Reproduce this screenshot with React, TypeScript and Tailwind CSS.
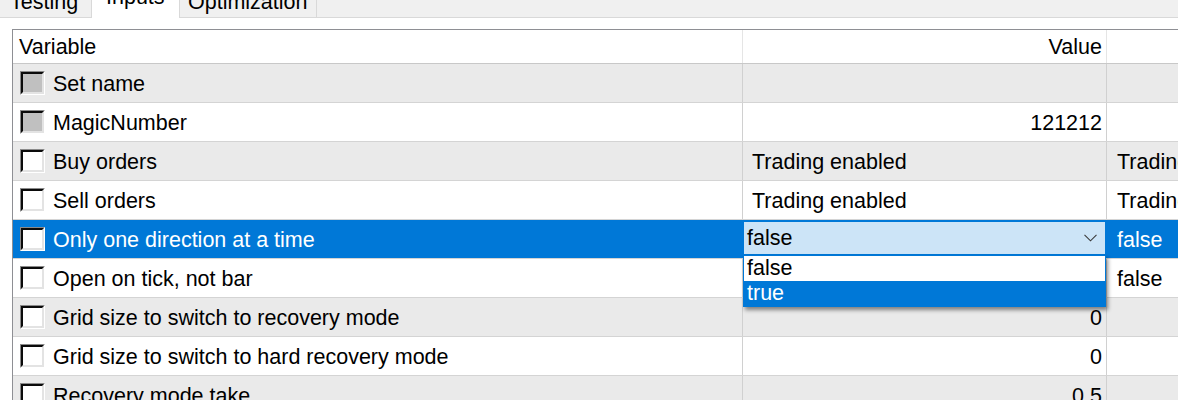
import React from "react";

type Row = {
  name: string;
  disabled?: boolean;
  value?: string;
  align?: "left" | "right";
  third?: string;
  selected?: boolean;
  combo?: boolean;
};

const rows: Row[] = [
  { name: "Set name", disabled: true, value: "", align: "right" },
  { name: "MagicNumber", disabled: true, value: "121212", align: "right" },
  { name: "Buy orders", value: "Trading enabled", align: "left", third: "Trading enabled" },
  { name: "Sell orders", value: "Trading enabled", align: "left", third: "Trading enabled" },
  { name: "Only one direction at a time", selected: true, combo: true, third: "false" },
  { name: "Open on tick, not bar", value: "", align: "left", third: "false" },
  { name: "Grid size to switch to recovery mode", value: "0", align: "right" },
  { name: "Grid size to switch to hard recovery mode", value: "0", align: "right" },
  { name: "Recovery mode take", value: "0.5", align: "right" },
];

function Checkbox({ disabled }: { disabled?: boolean }) {
  return (
    <div className="w-[25px] h-[24px] shrink-0 border border-t-[#8a8a8a] border-l-[#8a8a8a] border-b-[#ffffff] border-r-[#ffffff]">
      <div
        className={`w-full h-full border-2 border-t-[#0a0a0a] border-l-[#0a0a0a] border-b-[#e3e3e3] border-r-[#e3e3e3] ${
          disabled ? "bg-[#c0c0c0]" : "bg-white"
        }`}
      />
    </div>
  );
}

function Chevron() {
  return (
    <svg width="13" height="8" viewBox="0 0 13 8" fill="none">
      <path d="M0.5 0.8 L6.5 6.8 L12.5 0.8" stroke="#3a3a3a" strokeWidth="1.1" />
    </svg>
  );
}

export default function App() {
  return (
    <div className="w-[1178px] h-[400px] overflow-hidden bg-white text-black font-['Liberation_Sans',Arial,sans-serif] text-[21.5px]">
      {/* Tab strip */}
      <div className="flex h-[18px] overflow-hidden bg-[#f0f0f0]">
        <div className="w-[91px] shrink-0 border-b border-[#d9d9d9] pl-[10px] overflow-hidden">
          <div className="leading-[21.5px] mt-[-8px] whitespace-nowrap">Testing</div>
        </div>
        <div className="w-[89px] shrink-0 bg-white border-l border-r border-[#d9d9d9] pl-[14px] overflow-hidden">
          <div className="leading-[21.5px] mt-[-13px] whitespace-nowrap">Inputs</div>
        </div>
        <div className="w-[137px] shrink-0 border-b border-r border-[#d9d9d9] pl-[8px] overflow-hidden">
          <div className="leading-[21.5px] mt-[-8px] whitespace-nowrap">Optimization</div>
        </div>
        <div className="flex-1 border-b border-[#d9d9d9]" />
      </div>

      {/* Table */}
      <div className="pt-[11px] pl-[12px]">
        <div className="border-l border-t border-[#8e8f94] w-[1200px]">
          {/* Header */}
          <div className="flex h-[34px] border-b border-[#c8c8c8] bg-white">
            <div className="w-[730px] shrink-0 border-r border-[#e5e5e5] flex items-center pl-[6px] pt-[2px]">
              Variable
            </div>
            <div className="w-[364px] shrink-0 border-r border-[#e5e5e5] flex items-center justify-end pr-[4px] pt-[2px]">
              Value
            </div>
            <div className="flex-1" />
          </div>

          {rows.map((r, i) => {
            const bg = r.selected ? "bg-[#0078d7] text-white" : i % 2 === 0 ? "bg-[#eaeaea]" : "bg-white";
            const sep = r.selected ? "border-[#0078d7]" : "border-[#d0d0d0]";
            return (
              <div key={i} className={`flex h-[39px] border-b border-[#d4d4d4] ${bg}`}>
                <div className={`w-[730px] shrink-0 border-r ${sep} flex items-center pl-[7px] gap-[8px]`}>
                  <Checkbox disabled={r.disabled} />
                  <span className="whitespace-nowrap pt-[2px]">{r.name}</span>
                </div>
                <div className={`w-[364px] shrink-0 border-r ${sep} relative`}>
                  {r.combo ? (
                    <>
                      <div className="mt-[1px] h-[34px] bg-[#cce4f7] border border-[#0078d7] flex items-center justify-between pl-[3px] pr-[8px] text-black">
                        <span className="pt-[1px]">false</span>
                        <Chevron />
                      </div>
                      <div className="absolute top-[35px] left-0 right-0 z-10 bg-white border border-[#0078d7] shadow-[2px_3px_4px_rgba(0,0,0,0.45)]">
                        <div className="h-[25px] flex items-center pl-[3px] text-black bg-white">false</div>
                        <div className="h-[25px] flex items-center pl-[3px] text-white bg-[#0078d7]">true</div>
                      </div>
                    </>
                  ) : (
                    <div
                      className={`h-full flex items-center whitespace-nowrap pt-[2px] ${
                        r.align === "right" ? "justify-end pr-[4px]" : "pl-[9px]"
                      }`}
                    >
                      {r.value}
                    </div>
                  )}
                </div>
                <div className="flex-1 flex items-center pl-[10px] pt-[2px] whitespace-nowrap overflow-hidden">
                  {r.third ?? ""}
                </div>
              </div>
            );
          })}
        </div>
      </div>
    </div>
  );
}
